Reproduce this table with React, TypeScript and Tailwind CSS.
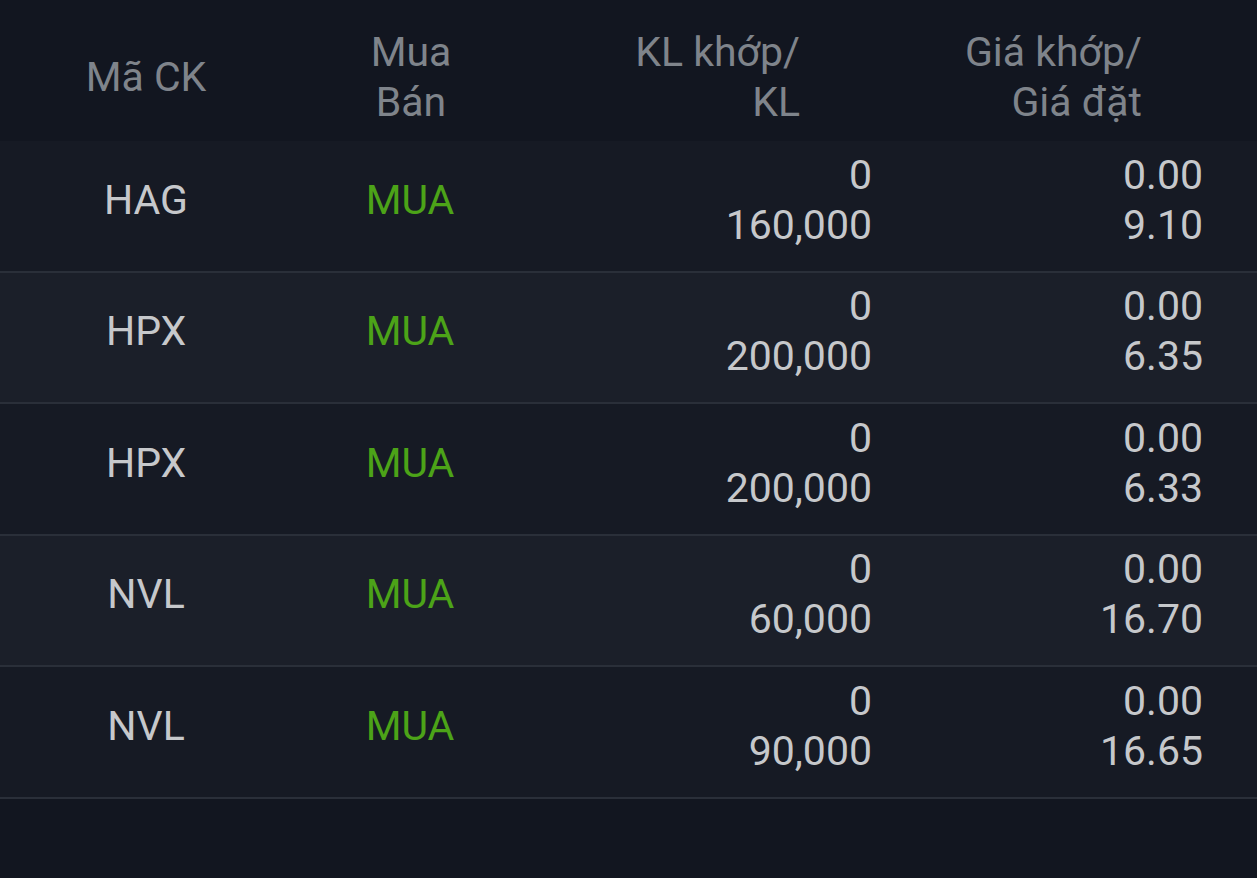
import React from "react";

const rows = [
  { code: "HAG", side: "MUA", kl1: "0", kl2: "160,000", g1: "0.00", g2: "9.10" },
  { code: "HPX", side: "MUA", kl1: "0", kl2: "200,000", g1: "0.00", g2: "6.35" },
  { code: "HPX", side: "MUA", kl1: "0", kl2: "200,000", g1: "0.00", g2: "6.33" },
  { code: "NVL", side: "MUA", kl1: "0", kl2: "60,000", g1: "0.00", g2: "16.70" },
  { code: "NVL", side: "MUA", kl1: "0", kl2: "90,000", g1: "0.00", g2: "16.65" },
];

export default function App() {
  return (
    <div
      className="w-[1257px] h-[878px] bg-[#121620] overflow-hidden text-[41px] leading-[50px]"
      style={{ fontFamily: "Roboto, 'Noto Sans', sans-serif" }}
    >
      <div className="flex h-[141px] items-center pt-[12px] text-[#7f848b]">
        <div className="w-[292px] text-center">Mã CK</div>
        <div className="w-[238px] text-center flex flex-col">
          <span>Mua</span>
          <span>Bán</span>
        </div>
        <div className="w-[342px] text-right pr-[72px] flex flex-col">
          <span>KL khớp/</span>
          <span>KL</span>
        </div>
        <div className="w-[331px] text-right pr-[61px] flex flex-col">
          <span>Giá khớp/</span>
          <span>Giá đặt</span>
        </div>
      </div>
      {rows.map((r, i) => (
        <div
          key={i}
          className={`flex h-[131.5px] items-center pb-[12px] border-b-2 border-[#2a2f39] ${
            i % 2 === 0 ? "bg-[#161a24]" : "bg-[#1b1f29]"
          }`}
        >
          <div className="w-[292px] text-center text-[#c6c8cb]">{r.code}</div>
          <div className="w-[236px] text-center text-[#4ca318]">{r.side}</div>
          <div className="w-[344px] text-right flex flex-col text-[#c6c8cb]">
            <span>{r.kl1}</span>
            <span>{r.kl2}</span>
          </div>
          <div className="w-[331px] text-right flex flex-col text-[#c6c8cb]">
            <span>{r.g1}</span>
            <span>{r.g2}</span>
          </div>
        </div>
      ))}
    </div>
  );
}
